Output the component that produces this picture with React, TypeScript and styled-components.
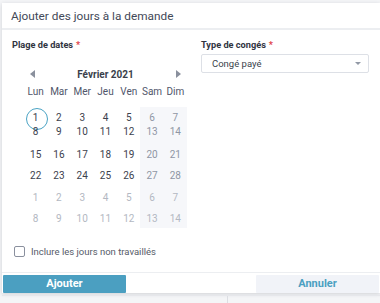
import React, { FC } from 'react';
import styled, { createGlobalStyle } from 'styled-components';

const GlobalStyle = createGlobalStyle`
	html, body {
		margin: 0;
		padding: 0;
		background: #f4f5f7;
		font-family: Roboto, 'Liberation Sans', sans-serif;
	}
	* {
		box-sizing: border-box;
	}
`;

const Page = styled.div`
	width: 380px;
	height: 303px;
	overflow: hidden;
	padding: 3px 0 0 2px;
`;

const Modal = styled.div`
	background: #fff;
	box-shadow: 0 1px 4px rgba(40, 45, 60, 0.18);
`;

const Header = styled.div`
	height: 27px;
	line-height: 27px;
	padding-left: 9px;
	font-size: 11.8px;
	color: #434958;
	border-bottom: 2px solid #eceef1;
`;

const Body = styled.div`
	display: grid;
	grid-template-columns: 189px 168px;
	padding: 9px 0 0 10px;
`;

const Column = styled.div`
	display: flex;
	flex-direction: column;
`;

const Label = styled.div`
	font-size: 9.2px;
	font-weight: 700;
	line-height: 12px;
	color: #30343f;

	span {
		color: #e0434a;
		margin-left: 3px;
	}
`;

const Calendar = styled.div`
	width: 163px;
	margin: 16px 0 0 12px;
`;

const Nav = styled.div`
	display: flex;
	align-items: center;
	justify-content: space-between;
	height: 14px;
	padding: 0 6px;
`;

const Arrow = styled.span<{ $dir: 'left' | 'right' }>`
	width: 0;
	height: 0;
	border-top: 4px solid transparent;
	border-bottom: 4px solid transparent;
	${(p) =>
		p.$dir === 'left'
			? 'border-right: 5px solid #8a909d;'
			: 'border-left: 5px solid #8a909d;'}
`;

const Month = styled.div`
	font-size: 10px;
	font-weight: 700;
	color: #3a3f4b;
`;

const Weekdays = styled.div`
	display: grid;
	grid-template-columns: repeat(7, 1fr);
	margin-top: 4px;
	line-height: 14px;
	font-size: 10px;
	color: #50566a;
	text-align: center;
`;

const Days = styled.div`
	display: grid;
	grid-template-columns: repeat(7, 1fr);
	grid-template-rows: 14.5px 23px 21px 21.5px 21.2px 19.8px;
	margin-top: 8px;
`;

const Day = styled.div<{ $weekend: boolean; $outside: boolean; $selected?: boolean }>`
	position: relative;
	padding-top: 3.5px;
	line-height: 14px;
	font-size: 10px;
	text-align: center;
	background: ${(p) => (p.$weekend ? '#f6f7fa' : 'transparent')};
	color: ${(p) => (p.$outside ? '#b3b8c2' : p.$weekend ? '#8f96a4' : '#3c414d')};

	${(p) =>
		p.$selected &&
		`
		&::before {
			content: '';
			position: absolute;
			left: 50%;
			top: 10.5px;
			width: 20px;
			height: 20px;
			margin: -10px 0 0 -10px;
			border: 1px solid #4aa3c4;
			border-radius: 50%;
		}
	`}
`;

const Select = styled.div`
	margin-top: 3px;
	height: 19px;
	display: flex;
	align-items: center;
	justify-content: space-between;
	padding: 0 7px 0 10px;
	border: 1px solid #dde0e6;
	border-radius: 2px;
	font-size: 9.5px;
	color: #3a3f4b;
`;

const Caret = styled.span`
	width: 0;
	height: 0;
	border-left: 3px solid transparent;
	border-right: 3px solid transparent;
	border-top: 3px solid #9299a6;
`;

const CheckRow = styled.label`
	grid-column: 1 / -1;
	display: flex;
	align-items: center;
	gap: 6px;
	margin: 18px 0 0 2px;
	font-size: 9.5px;
	color: #555b68;
`;

const Box = styled.span`
	width: 11px;
	height: 11px;
	border: 1px solid #8a909e;
	border-radius: 2px;
`;

const Footer = styled.div`
	display: flex;
	justify-content: space-between;
	margin-top: 15px;
	padding: 2px 1px 0 1px;
	border-top: 1px solid #eceef1;
`;

const Button = styled.button<{ $primary?: boolean }>`
	width: 123px;
	height: 18px;
	border: none;
	border-radius: 1px;
	padding: 0;
	font-family: inherit;
	font-size: 11px;
	font-weight: 700;
	background: ${(p) => (p.$primary ? '#4b9fc1' : '#f1f3f8')};
	color: ${(p) => (p.$primary ? '#fff' : '#4b9fc1')};
`;

const Behind = styled.div`
	display: flex;
	height: 10px;
	margin-top: 2px;
	border-top: 1px solid #e6e7eb;
`;

const BehindCell = styled.div`
	width: 226px;
	border-right: 1px solid #dcdee3;
`;

const weekdays = ['Lun', 'Mar', 'Mer', 'Jeu', 'Ven', 'Sam', 'Dim'];

const weeks: { n: number; outside: boolean }[][] = [
	[1, 2, 3, 4, 5, 6, 7],
	[8, 9, 10, 11, 12, 13, 14],
	[15, 16, 17, 18, 19, 20, 21],
	[22, 23, 24, 25, 26, 27, 28],
	[1, 2, 3, 4, 5, 6, 7],
	[8, 9, 10, 11, 12, 13, 14],
].map((row, w) => row.map((n) => ({ n, outside: w > 3 })));

const App: FC = () => {
	return (
		<Page>
			<GlobalStyle />
			<Modal>
				<Header>Ajouter des jours à la demande</Header>
				<Body>
					<Column>
						<Label>
							Plage de dates<span>*</span>
						</Label>
						<Calendar>
							<Nav>
								<Arrow $dir='left' />
								<Month>Février 2021</Month>
								<Arrow $dir='right' />
							</Nav>
							<Weekdays>
								{weekdays.map((d) => (
									<div key={d}>{d}</div>
								))}
							</Weekdays>
							<Days>
								{weeks.map((row, w) =>
									row.map((d, i) => (
										<Day
											key={`${w}-${i}`}
											$weekend={i > 4}
											$outside={d.outside}
											$selected={w === 0 && i === 0}
										>
											{d.n}
										</Day>
									))
								)}
							</Days>
						</Calendar>
					</Column>
					<Column>
						<Label>
							Type de congés<span>*</span>
						</Label>
						<Select>
							Congé payé
							<Caret />
						</Select>
					</Column>
					<CheckRow>
						<Box />
						Inclure les jours non travaillés
					</CheckRow>
				</Body>
				<Footer>
					<Button $primary>Ajouter</Button>
					<Button>Annuler</Button>
				</Footer>
			</Modal>
			<Behind>
				<BehindCell />
			</Behind>
		</Page>
	);
};

export default App;
